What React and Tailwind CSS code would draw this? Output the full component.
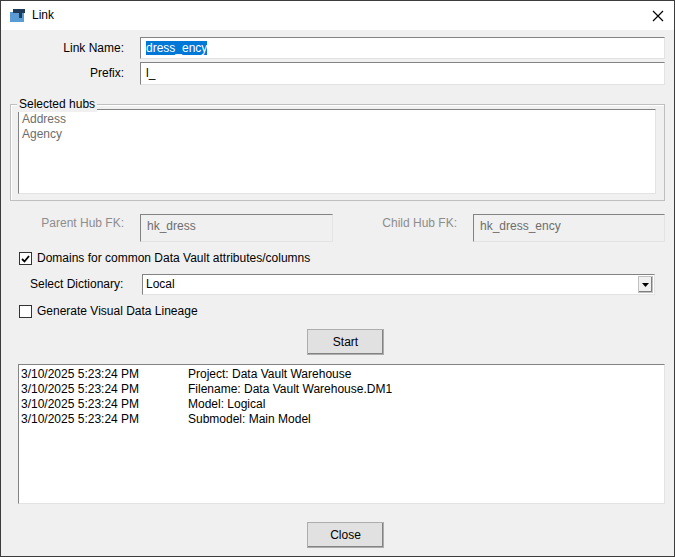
export default function App() {
  const f = { fontFamily: "'Liberation Sans', Arial, sans-serif" };
  const sunken = "border border-t-[#838383] border-l-[#838383] border-r-[#e3e3e3] border-b-[#e3e3e3]";
  const log = [
    ["Project: Data Vault Warehouse"],
    ["Filename: Data Vault Warehouse.DM1"],
    ["Model: Logical"],
    ["Submodel: Main Model"],
  ];
  const btn = "w-[77px] h-[26px] bg-[#e1e1e1] border border-[#adadad] shadow-[inset_-1px_-1px_0_#838383] text-[12px] text-black flex items-center justify-center";
  return (
    <div style={f} className="w-[675px] h-[557px] border border-[#3c3c3c] bg-[#f0f0f0] text-[12px] leading-[15px] text-black flex flex-col overflow-hidden">
      <div className="h-[29px] bg-white flex items-center px-[9px] shrink-0">
        <svg width="15" height="13" viewBox="0 0 15 13" className="mr-[7px]">
          <rect x="0" y="3" width="14" height="10" fill="#5b9bd5" />
          <rect x="3" y="0" width="12" height="4" fill="#1f3b57" />
          <rect x="9" y="0" width="3" height="9" fill="#1f3b57" />
        </svg>
        <span className="text-[12px]">Link</span>
        <div className="flex-1" />
        <svg width="12" height="12" viewBox="0 0 12 12" className="mr-[1px]">
          <path d="M1 1L11 11M11 1L1 11" stroke="#000" strokeWidth="1.2" />
        </svg>
      </div>
      <div className="flex flex-col pl-[9px] pr-[9px]">
        <div className="flex items-center mt-[7px] h-[22px]">
          <span className="w-[114px] text-right">Link Name:</span>
          <div className={`ml-[16px] flex-1 h-[22px] bg-white ${sunken} flex items-center pl-[5px]`}>
            <span className="bg-[#0078d7] text-white leading-[14px]">dress_ency</span>
          </div>
        </div>
        <div className="flex items-center mt-[3px] h-[23px]">
          <span className="w-[114px] text-right">Prefix:</span>
          <div className={`ml-[16px] flex-1 h-[23px] bg-white ${sunken} flex items-center pl-[5px]`}>l_</div>
        </div>
        <div className="relative mt-[19px] h-[97px] border border-[#bfbfbf] shadow-[inset_1px_1px_0_#fff]">
          <span className="absolute -top-[8px] left-[6px] bg-[#f0f0f0] px-[2px] leading-[15px]">Selected hubs</span>
          <div className={`mt-[4px] ml-[7px] mr-[8px] h-[85px] bg-white ${sunken} text-[#6d6d6d] pl-[3px] pt-[2px]`}>
            <div>Address</div>
            <div>Agency</div>
          </div>
        </div>
        <div className="flex items-start mt-[13px] h-[28px] text-[#8d8d8d]">
          <span className="w-[114px] text-right mt-[2px]">Parent Hub FK:</span>
          <div className={`ml-[16px] w-[193px] h-[28px] ${sunken} pl-[6px] pt-[4px] text-[#6d6d6d]`}>hk_dress</div>
          <span className="w-[124px] text-right mt-[2px]">Child Hub FK:</span>
          <div className={`ml-[16px] flex-1 h-[28px] ${sunken} pl-[6px] pt-[4px] text-[#6d6d6d]`}>hk_dress_ency</div>
        </div>
        <div className="flex items-center mt-[9px] ml-[9px] h-[15px]">
          <div className="w-[13px] h-[13px] border border-[#333] bg-white flex items-center justify-center">
            <svg width="9" height="8" viewBox="0 0 9 8"><path d="M1 4L3.5 6.5L8 1" stroke="#000" strokeWidth="1.8" fill="none" /></svg>
          </div>
          <span className="ml-[5px]">Domains for common Data Vault attributes/columns</span>
        </div>
        <div className="flex items-center mt-[8px] h-[21px]">
          <span className="ml-[20px] w-[112px]">Select Dictionary:</span>
          <div className={`flex-1 mr-[10px] h-[21px] bg-white ${sunken} flex items-center pl-[3px]`}>
            <span className="flex-1">Local</span>
            <div className="w-[15px] h-[17px] mr-[1px] bg-[#f0f0f0] border border-[#c0c0c0] shadow-[inset_-1px_-1px_0_#808080] flex items-center justify-center">
              <svg width="7" height="4" viewBox="0 0 7 4"><path d="M0 0H7L3.5 4Z" fill="#000" /></svg>
            </div>
          </div>
        </div>
        <div className="flex items-center mt-[9px] ml-[9px] h-[15px]">
          <div className="w-[13px] h-[13px] border border-[#333] bg-white" />
          <span className="ml-[5px]">Generate Visual Data Lineage</span>
        </div>
        <div className="flex justify-center mt-[10px] pl-[16px]">
          <div className={btn}>Start</div>
        </div>
        <div className={`mt-[9px] ml-[8px] h-[140px] bg-white ${sunken} pt-[2px] pl-[2px]`}>
          {log.map((r, i) => (
            <div key={i} className="flex">
              <span className="w-[167px]">3/10/2025 5:23:24 PM</span>
              <span>{r[0]}</span>
            </div>
          ))}
        </div>
        <div className="flex justify-center mt-[18px] pl-[16px]">
          <div className={btn}>Close</div>
        </div>
      </div>
    </div>
  );
}
